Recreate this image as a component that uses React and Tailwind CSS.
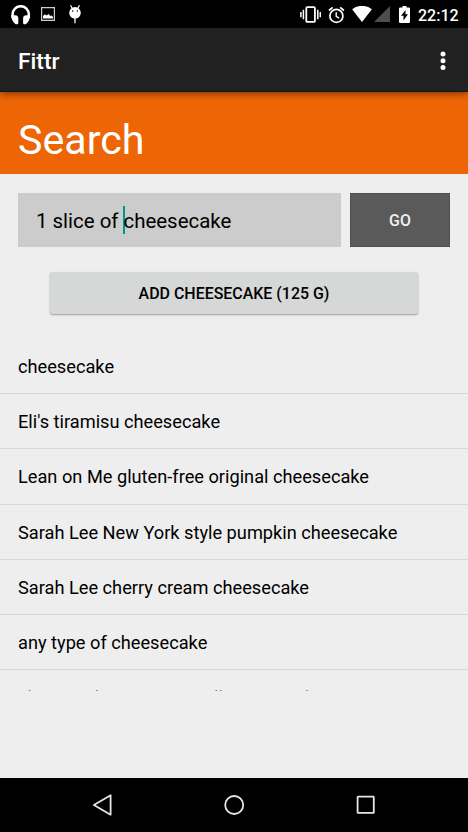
const results = [
  'cheesecake',
  "Eli's tiramisu cheesecake",
  'Lean on Me gluten-free original cheesecake',
  'Sarah Lee New York style pumpkin cheesecake',
  'Sarah Lee cherry cream cheesecake',
  'any type of cheesecake',
];

const HeadphonesIcon = () => (
  <svg width="20" height="20" viewBox="0 0 20 20" fill="none">
    <path d="M1.6 13V9.3a8 8 0 0 1 16.2 0V13" stroke="#fff" strokeWidth="2.5" />
    <path d="M.3 10.2h3.4l2 .4q1.6.6 1.6 2.4v5.2q0 1.1-1.1 1.1H4.6C2 17.2.3 14 .3 10.2ZM19.1 10.2h-3.4l-2 .4q-1.6.6-1.6 2.4v5.2q0 1.1 1.1 1.1h1.6c2.6-2.1 4.3-5.3 4.3-9.1Z" fill="#fff" />
  </svg>
);

const PictureIcon = () => (
  <svg width="14" height="14" viewBox="0 0 14 14" fill="none">
    <path d="M.6.6h12.8v12.8H.6z" stroke="#ccc" strokeWidth="1.2" />
    <path d="M2 11.5V9l2-1.8 1.6 1.4L7.8 7l1.3 2 1.5-.5L12 10v1.5z" fill="#fff" />
  </svg>
);

const LollipopIcon = () => (
  <svg width="12" height="19" viewBox="0 0 12 19" fill="none">
    <path d="m1.8.8 1.7 3M10.2.8l-1.7 3M6 13v4.8" stroke="#fff" strokeWidth="1.3" strokeLinecap="round" />
    <circle cx="6" cy="7.8" r="5.8" fill="#fff" />
    <circle cx="3.7" cy="5.9" r=".75" fill="#000" />
    <circle cx="8.3" cy="5.9" r=".75" fill="#000" />
  </svg>
);

const VibrateIcon = () => (
  <svg width="21" height="18" viewBox="0 0 21 18" fill="none" stroke="#fff">
    <rect x="6.3" y="1.2" width="8.6" height="14.7" rx="1" strokeWidth="1.8" />
    <path d="M3.4 3.8v9.4M17.8 3.8v9.4M.9 6v5.2M20.3 6v5.2" strokeWidth="1.5" />
  </svg>
);

const AlarmIcon = () => (
  <svg width="17" height="18" viewBox="0 0 17 18" fill="none" stroke="#fff">
    <circle cx="8.4" cy="9.9" r="6.5" strokeWidth="1.7" />
    <path d="M8.2 6.2v4.1l3 1.8" strokeWidth="1.4" />
    <path d="m.9 4.5 3.7-3.1M15.9 4.5l-3.7-3.1" strokeWidth="1.7" />
  </svg>
);

const WifiIcon = () => (
  <svg width="20" height="16" viewBox="0 0 20 16">
    <path d="M10 15.9.1 3.3a15.9 15.9 0 0 1 19.8 0z" fill="#fff" />
  </svg>
);

const SignalIcon = () => (
  <svg width="16" height="16" viewBox="0 0 16 16">
    <path d="M16 0v16H0z" fill="#4d4d4d" />
  </svg>
);

const BatteryIcon = () => (
  <svg width="11" height="17" viewBox="0 0 11 17">
    <path d="M3.5 0h4v1.6h2.3q1.2 0 1.2 1.2v13q0 1.2-1.2 1.2H1.2Q0 17 0 15.8v-13q0-1.2 1.2-1.2h2.3z" fill="#fff" />
    <path d="M6.5 4.1v4.1H9l-4.5 6.3v-4.8H2z" fill="#000" />
  </svg>
);

const StatusBar = () => (
  <div className="flex h-7 shrink-0 items-start justify-between bg-black pr-[9px] pl-[11px]">
    <div className="flex">
      <div className="mt-[4.5px] w-[30px]"><HeadphonesIcon /></div>
      <div className="mt-[7px] w-7"><PictureIcon /></div>
      <div className="mt-[5px]"><LollipopIcon /></div>
    </div>
    <div className="flex">
      <div className="mt-[6px] w-[28px]"><VibrateIcon /></div>
      <div className="mt-[5.5px] w-[24px]"><AlarmIcon /></div>
      <div className="mt-[6px] w-[22px]"><WifiIcon /></div>
      <div className="mt-[6px] w-[25px]"><SignalIcon /></div>
      <div className="mt-[6px] w-[19px]"><BatteryIcon /></div>
      <span className="mt-[6px] w-[41px] text-[16px] leading-5 font-medium whitespace-nowrap text-white">22:12</span>
    </div>
  </div>
);

const Toolbar = () => (
  <div className="relative z-10 flex h-16 shrink-0 items-center justify-between border-b border-[#161616] bg-[#212121] pr-[22px] pl-[18px] shadow-[0_2px_7px_rgba(0,0,0,0.45)]">
    <h1 className="pt-[5px] text-[22.75px] leading-7 font-medium text-white">Fittr</h1>
    <svg width="6" height="20" viewBox="0 0 6 20" fill="#fff">
      <circle cx="3" cy="3.9" r="2.5" />
      <circle cx="3" cy="10.8" r="2.5" />
      <circle cx="3" cy="17.5" r="2.5" />
    </svg>
  </div>
);

const NavBar = () => (
  <div className="flex h-[54px] shrink-0 items-center justify-between bg-black pr-[92px] pl-[92px]">
    <svg width="21" height="22" viewBox="0 0 21 22" fill="none" stroke="#e6e6e6" strokeWidth="1.8" strokeLinejoin="round">
      <path d="M18.6 1.3v19.4L1.9 11z" />
    </svg>
    <svg width="22" height="22" viewBox="0 0 22 22" fill="none" stroke="#e6e6e6" strokeWidth="1.8">
      <circle cx="10.2" cy="11" r="9" />
    </svg>
    <svg width="20" height="20" viewBox="0 0 20 20" fill="none" stroke="#e6e6e6" strokeWidth="1.8">
      <rect x="1.6" y="1.7" width="16.2" height="16.2" rx=".5" />
    </svg>
  </div>
);

const App = () => {
  return (
    <div className="flex h-[832px] w-[468px] flex-col overflow-hidden bg-[#eeeeee] font-['Roboto',sans-serif] text-black">
      <StatusBar />
      <Toolbar />

      {/* Page heading */}
      <div className="flex h-[82px] shrink-0 items-center bg-[#ee6505] pt-[13px] pl-[18px]">
        <h2 className="text-[41.2px] leading-[48px] text-white">Search</h2>
      </div>

      {/* Search form */}
      <div className="mt-[19px] flex h-[54px] shrink-0 gap-[9px] pr-[18px] pl-[18px]">
        <div className="flex flex-1 items-center bg-[#cccccc] pl-[18px] text-[20.45px] whitespace-pre">
          <span className="pt-[2px]">1 slice of </span>
          <span className="-mr-[2px] h-7 w-[2px] bg-[#009688]" />
          <span className="pt-[2px]">cheesecake</span>
        </div>
        <button className="w-[100px] border border-[#4f4f50] bg-[#5a5a5b] pt-[2px] text-[15.9px] font-medium text-[#f0f0f0]">GO</button>
      </div>

      <button className="mx-[50px] mt-[25px] h-[42px] shrink-0 rounded-[3px] bg-[#d6d8d7] pt-[2px] text-[15.95px] font-medium shadow-[0_1px_2px_rgba(0,0,0,0.35)]">
        ADD CHEESECAKE (125 G)
      </button>

      {/* Results, the last row is cut off by the list's edge */}
      <ul className="mt-[25px] h-[352px] shrink-0 overflow-hidden text-[18.22px]">
        {results.map((name) => (
          <li key={name} className="flex h-[55.2px] items-center border-b border-[#d8d8d8] pt-[1.2px] pl-[18px]">
            {name}
          </li>
        ))}
        <li className="flex h-[55.2px] items-center pb-[1px] pl-[18px] tracking-[-0.08px] text-[#888]">cheesecake creamy vanilla syrup cake</li>
      </ul>

      <div className="flex-1" />
      <NavBar />
    </div>
  );
};

export default App;
